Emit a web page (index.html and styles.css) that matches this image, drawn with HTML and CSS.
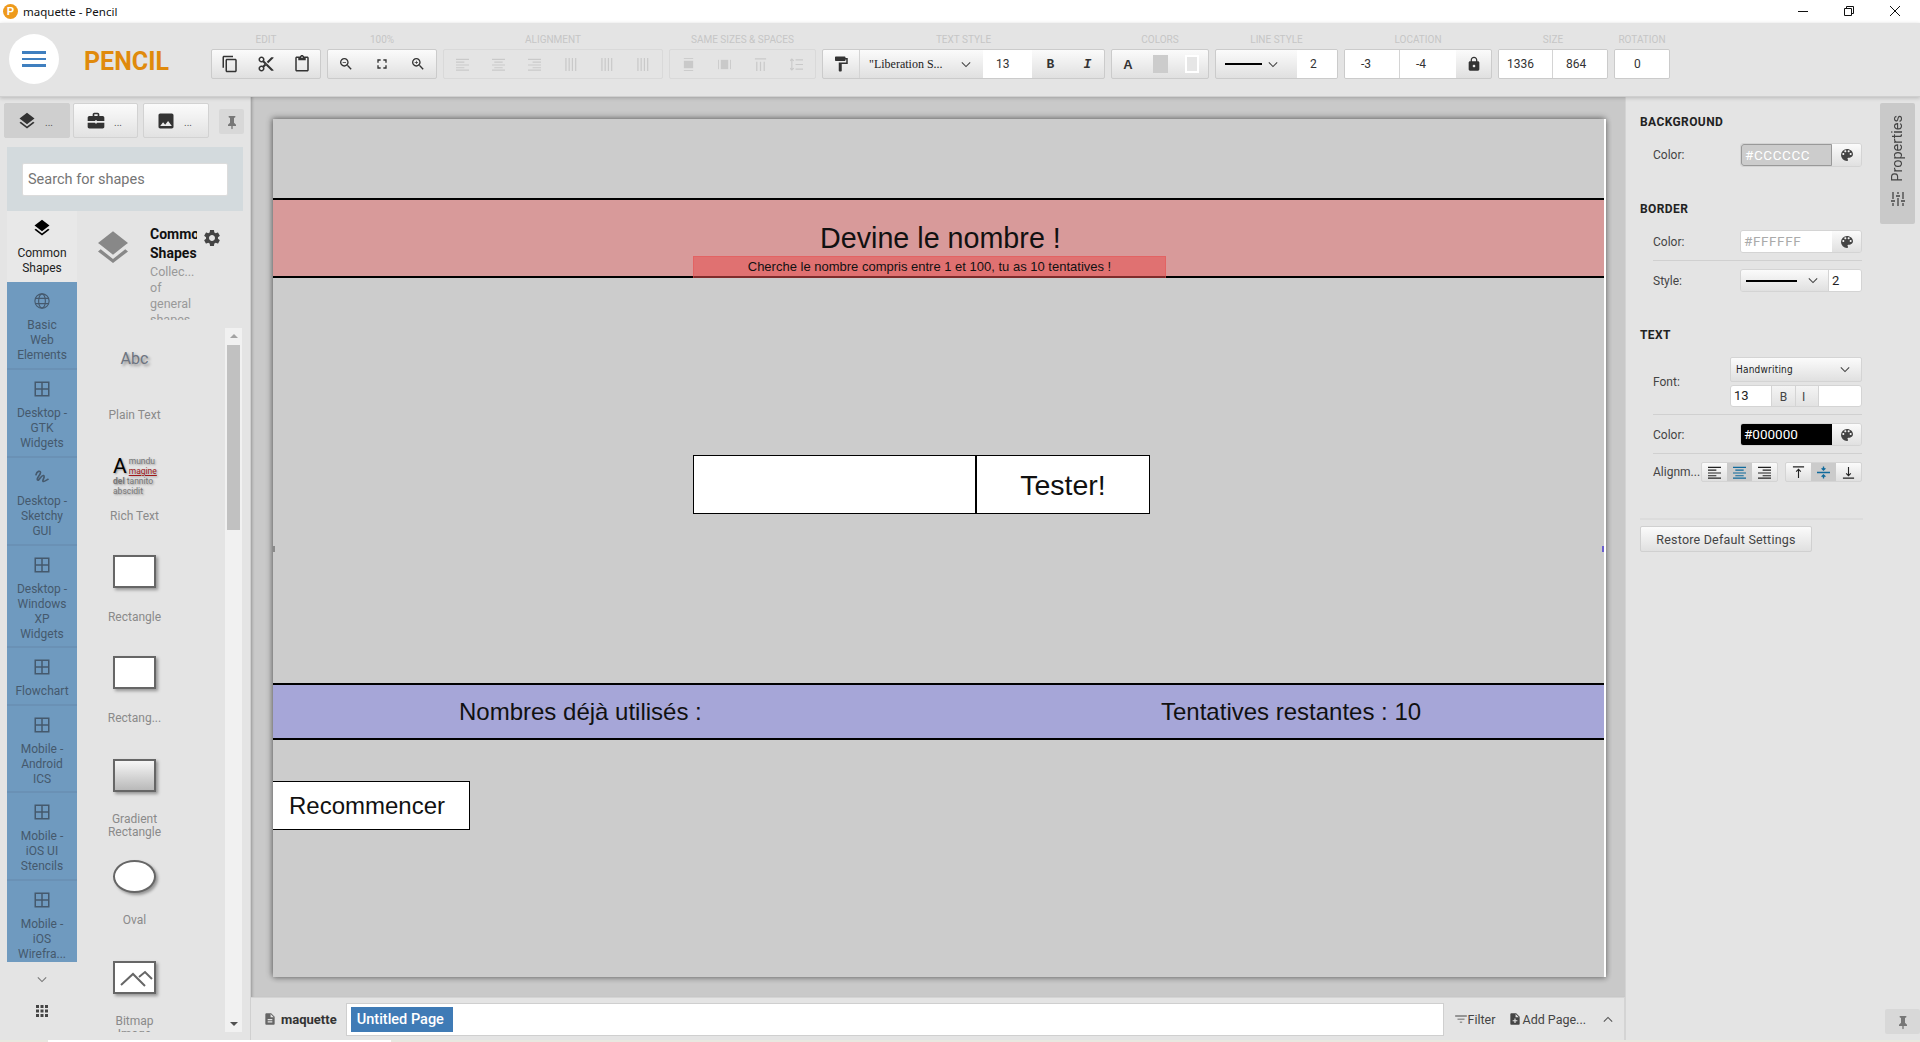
FILE: index.html
```html
<!DOCTYPE html>
<html lang="fr">
<head>
    <meta charset="UTF-8">
    <meta name="viewport" content="width=device-width, initial-scale=1.0">
    <title>maquette - Pencil</title>
    <link rel="stylesheet" href="styles.css">
</head>
<body>
    <!-- icon set -->
    <svg class="icon-defs" xmlns="http://www.w3.org/2000/svg">
        <symbol id="i-copy" viewBox="0 0 24 24"><path d="M16 1H4c-1.1 0-2 .9-2 2v14h2V3h12V1zm3 4H8c-1.1 0-2 .9-2 2v14c0 1.1.9 2 2 2h11c1.1 0 2-.9 2-2V7c0-1.1-.9-2-2-2zm0 16H8V7h11v14z"/></symbol>
        <symbol id="i-cut" viewBox="0 0 24 24"><path d="M9.64 7.64c.23-.5.36-1.05.36-1.64 0-2.21-1.79-4-4-4S2 3.79 2 6s1.79 4 4 4c.59 0 1.14-.13 1.64-.36L10 12l-2.36 2.36C7.14 14.13 6.59 14 6 14c-2.21 0-4 1.79-4 4s1.79 4 4 4 4-1.79 4-4c0-.59-.13-1.14-.36-1.64L12 14l7 7h3v-1L9.64 7.64zM6 8c-1.1 0-2-.89-2-2s.9-2 2-2 2 .89 2 2-.9 2-2 2zm0 12c-1.1 0-2-.89-2-2s.9-2 2-2 2 .89 2 2-.9 2-2 2zm6-7.5c-.28 0-.5-.22-.5-.5s.22-.5.5-.5.5.22.5.5-.22.5-.5.5zM19 3l-6 6 2 2 7-7V3z"/></symbol>
        <symbol id="i-paste" viewBox="0 0 24 24"><path d="M19 2h-4.18C14.4.84 13.3 0 12 0c-1.3 0-2.4.84-2.82 2H5c-1.1 0-2 .9-2 2v16c0 1.1.9 2 2 2h14c1.1 0 2-.9 2-2V4c0-1.1-.9-2-2-2zm-7 0c.55 0 1 .45 1 1s-.45 1-1 1-1-.45-1-1 .45-1 1-1zm7 18H5V4h2v3h10V4h2v16z"/></symbol>
        <symbol id="i-zoom-out" viewBox="0 0 24 24"><path d="M15.5 14h-.79l-.28-.27C15.41 12.59 16 11.11 16 9.5 16 5.91 13.09 3 9.5 3S3 5.91 3 9.5 5.91 16 9.5 16c1.61 0 3.09-.59 4.23-1.57l.27.28v.79l5 4.99L20.49 19l-4.99-5zm-6 0C7.01 14 5 11.99 5 9.5S7.01 5 9.5 5 14 7.01 14 9.5 11.99 14 9.5 14zM7 9h5v1H7z"/></symbol>
        <symbol id="i-zoom-in" viewBox="0 0 24 24"><path d="M15.5 14h-.79l-.28-.27C15.41 12.59 16 11.11 16 9.5 16 5.91 13.09 3 9.5 3S3 5.91 3 9.5 5.91 16 9.5 16c1.61 0 3.09-.59 4.23-1.57l.27.28v.79l5 4.99L20.49 19l-4.99-5zm-6 0C7.01 14 5 11.99 5 9.5S7.01 5 9.5 5 14 7.01 14 9.5 11.99 14 9.5 14zM12 10h-2v2H9v-2H7V9h2V7h1v2h2v1z"/></symbol>
        <symbol id="i-fit" viewBox="0 0 24 24"><path d="M7 14H5v5h5v-2H7v-3zm-2-4h2V7h3V5H5v5zm12 7h-3v2h5v-5h-2v3zM14 5v2h3v3h2V5h-5z"/></symbol>
        <symbol id="i-layers" viewBox="0 0 24 24"><path d="M11.99 18.54l-7.37-5.73L3 14.07l9 7 9-7-1.63-1.27-7.38 5.74zM12 16l7.36-5.73L21 9l-9-7-9 7 1.63 1.27L12 16z"/></symbol>
        <symbol id="i-work" viewBox="0 0 24 24"><path d="M20 6h-4V4c0-1.11-.89-2-2-2h-4c-1.11 0-2 .89-2 2v2H4c-1.11 0-1.99.89-1.99 2L2 12h9v-1h2v1h9V8c0-1.11-.89-2-2-2zm-6 0h-4V4h4v2zM2 14v5c0 1.11.89 2 2 2h16c1.11 0 2-.89 2-2v-5h-9v1h-2v-1H2z"/></symbol>
        <symbol id="i-image" viewBox="0 0 24 24"><path d="M21 19V5c0-1.1-.9-2-2-2H5c-1.1 0-2 .9-2 2v14c0 1.1.9 2 2 2h14c1.1 0 2-.9 2-2zM8.5 13.5l2.5 3.01L14.5 12l4.5 6H5l3.5-4.5z"/></symbol>
        <symbol id="i-pin" viewBox="0 0 24 24"><path d="M7 3h10v2l-2 1v7l3 3v2h-5v4l-1 1-1-1v-4H6v-2l3-3V6L7 5z"/></symbol>
        <symbol id="i-gear" viewBox="0 0 24 24"><path d="M19.14 12.94c.04-.3.06-.61.06-.94 0-.32-.02-.64-.07-.94l2.03-1.58c.18-.14.23-.41.12-.61l-1.92-3.32c-.12-.22-.37-.29-.59-.22l-2.39.96c-.5-.38-1.03-.7-1.62-.94l-.36-2.54c-.04-.24-.24-.41-.48-.41h-3.84c-.24 0-.43.17-.47.41l-.36 2.54c-.59.24-1.13.57-1.62.94l-2.39-.96c-.22-.08-.47 0-.59.22L2.74 8.87c-.12.21-.08.47.12.61l2.03 1.58c-.05.3-.09.63-.09.94s.02.64.07.94l-2.03 1.58c-.18.14-.23.41-.12.61l1.92 3.32c.12.22.37.29.59.22l2.39-.96c.5.38 1.03.7 1.62.94l.36 2.54c.05.24.24.41.48.41h3.84c.24 0 .44-.17.47-.41l.36-2.54c.59-.24 1.13-.56 1.62-.94l2.39.96c.22.08.47 0 .59-.22l1.92-3.32c.12-.22.07-.47-.12-.61l-2.01-1.58zM12 15.6c-1.98 0-3.6-1.62-3.6-3.6s1.62-3.6 3.6-3.6 3.6 1.62 3.6 3.6-1.62 3.6-3.6 3.6z"/></symbol>
        <symbol id="i-palette" viewBox="0 0 24 24"><path d="M12 3a9 9 0 0 0 0 18c.83 0 1.5-.67 1.5-1.5 0-.39-.15-.74-.39-1.01-.23-.26-.38-.61-.38-.99 0-.83.67-1.5 1.5-1.5H16c2.76 0 5-2.24 5-5 0-4.42-4.03-8-9-8zm-5.5 9c-.83 0-1.5-.67-1.5-1.5S5.67 9 6.5 9 8 9.67 8 10.5 7.33 12 6.5 12zm3-4C8.67 8 8 7.33 8 6.5S8.67 5 9.5 5s1.5.67 1.5 1.5S10.33 8 9.5 8zm5 0c-.83 0-1.5-.67-1.5-1.5S13.67 5 14.5 5s1.5.67 1.5 1.5S15.33 8 14.5 8zm3 4c-.83 0-1.5-.67-1.5-1.5S16.67 9 17.5 9s1.5.67 1.5 1.5-.67 1.5-1.5 1.5z"/></symbol>
        <symbol id="i-lock" viewBox="0 0 24 24"><path d="M18 8h-1V6c0-2.76-2.24-5-5-5S7 3.24 7 6v2H6c-1.1 0-2 .9-2 2v10c0 1.1.9 2 2 2h12c1.1 0 2-.9 2-2V10c0-1.1-.9-2-2-2zm-6 9c-1.1 0-2-.9-2-2s.9-2 2-2 2 .9 2 2-.9 2-2 2zm3.1-9H8.9V6c0-1.71 1.39-3.1 3.1-3.1 1.71 0 3.1 1.39 3.1 3.1v2z"/></symbol>
        <symbol id="i-paint" viewBox="0 0 24 24"><path d="M18 4V3c0-.55-.45-1-1-1H5c-.55 0-1 .45-1 1v4c0 .55.45 1 1 1h12c.55 0 1-.45 1-1V6h1v4H9v11c0 .55.45 1 1 1h2c.55 0 1-.45 1-1v-9h8V4h-3z"/></symbol>
        <symbol id="i-tune" viewBox="0 0 16 16"><path d="M3 1v7M3 12v3M8 1v2M8 7v8M13 1v7M13 12v3M1 10h4M6 5h4M11 10h4" fill="none" stroke="currentColor" stroke-width="1.3"/></symbol>
        <symbol id="i-apps" viewBox="0 0 24 24"><path d="M4 8h4V4H4v4zm6 12h4v-4h-4v4zm-6 0h4v-4H4v4zm0-6h4v-4H4v4zm6 0h4v-4h-4v4zm6-10v4h4V4h-4zm-6 4h4V4h-4v4zm6 6h4v-4h-4v4zm0 6h4v-4h-4v4z"/></symbol>
        <symbol id="i-file" viewBox="0 0 24 24"><path d="M14 2H6c-1.1 0-1.99.9-1.99 2L4 20c0 1.1.89 2 1.99 2H18c1.1 0 2-.9 2-2V8l-6-6zm2 16H8v-2h8v2zm0-4H8v-2h8v2zm-3-5V3.5L18.5 9H13z"/></symbol>
        <symbol id="i-add-file" viewBox="0 0 24 24"><path d="M14 2H6c-1.1 0-1.99.9-1.99 2L4 20c0 1.1.89 2 1.99 2H18c1.1 0 2-.9 2-2V8l-6-6zm2 14h-3v3h-2v-3H8v-2h3v-3h2v3h3v2zm-3-7V3.5L18.5 9H13z"/></symbol>
        <symbol id="i-filter" viewBox="0 0 24 24"><path d="M10 18h4v-1.5h-4V18zM2 6v1.500h20V6H2zm4 7h12v-1.500H6V13z"/></symbol>
        <symbol id="i-chevron" viewBox="0 0 12 8"><path d="M1 1.5l5 5 5-5" fill="none" stroke="currentColor" stroke-width="1.3"/></symbol>
        <symbol id="i-chevron-up" viewBox="0 0 12 8"><path d="M1 6.5l5-5 5 5" fill="none" stroke="currentColor" stroke-width="1.3"/></symbol>
        <symbol id="i-globe" viewBox="0 0 24 24"><g fill="none" stroke="currentColor" stroke-width="1.5"><circle cx="12" cy="12" r="9.5"/><ellipse cx="12" cy="12" rx="4.5" ry="9.5"/><path d="M3 8.5h18M3 15.5h18"/></g></symbol>
        <symbol id="i-grid" viewBox="0 0 24 24"><g fill="none" stroke="currentColor" stroke-width="2"><rect x="3" y="3" width="18" height="18"/><path d="M12 3v18M3 12h18"/></g></symbol>
        <symbol id="i-sketch" viewBox="0 0 24 24"><path d="M4 9c1-5 6-6 6-3 0 4-6 7-4 10 2 2 5-7 8-6 3 1-3 8 0 8 2 0 4-2 6-3" fill="none" stroke="currentColor" stroke-width="2.2" stroke-linecap="round"/></symbol>
        <symbol id="i-al-left" viewBox="0 0 14 14"><path d="M0 1.5h14M0 4.5h9M0 7.5h14M0 10.5h9M0 13h14" fill="none" stroke="currentColor" stroke-width="1.2"/></symbol>
        <symbol id="i-al-center" viewBox="0 0 14 14"><path d="M0 1.5h14M2.5 4.5h9M0 7.5h14M2.5 10.5h9M0 13h14" fill="none" stroke="currentColor" stroke-width="1.2"/></symbol>
        <symbol id="i-al-right" viewBox="0 0 14 14"><path d="M0 1.5h14M5 4.5h9M0 7.5h14M5 10.5h9M0 13h14" fill="none" stroke="currentColor" stroke-width="1.2"/></symbol>
        <symbol id="i-al-top" viewBox="0 0 14 14"><path d="M1 1h12M7 13V4M4.5 6L7 3.5 9.5 6" fill="none" stroke="currentColor" stroke-width="1.2"/></symbol>
        <symbol id="i-al-middle" viewBox="0 0 14 14"><path d="M0 7h14M7 .5v4M5 2.5l2 2 2-2M7 13.5v-4M5 11.5l2-2 2 2" fill="none" stroke="currentColor" stroke-width="1.4"/></symbol>
        <symbol id="i-al-bottom" viewBox="0 0 14 14"><path d="M1 13h12M7 1v9M4.5 8L7 10.5 9.5 8" fill="none" stroke="currentColor" stroke-width="1.2"/></symbol>
        <symbol id="i-dist-v" viewBox="0 0 14 14"><path d="M2 .5h10M2 13.5h10" stroke="currentColor" fill="none"/><rect x="2" y="3" width="10" height="8" fill="currentColor"/></symbol>
        <symbol id="i-dist-h" viewBox="0 0 14 14"><path d="M.5 2v10M13.5 2v10" stroke="currentColor" fill="none"/><rect x="3" y="2" width="8" height="10" fill="currentColor"/></symbol>
        <symbol id="i-bars-a" viewBox="0 0 14 14"><path d="M1 0v14M4.5 0v14M8 0v14M11.5 0v14" fill="none" stroke="currentColor" stroke-width="1.3"/></symbol>
        <symbol id="i-space-h" viewBox="0 0 14 14"><path d="M1 1h12M3 4v10M7 4v10M11 4v10" fill="none" stroke="currentColor" stroke-width="1.3"/></symbol>
        <symbol id="i-space-v" viewBox="0 0 14 14"><path d="M2 1v12M0 3l2-2 2 2M0 11l2 2 2-2M6 2h8M6 7h8M6 12h8" fill="none" stroke="currentColor" stroke-width="1.2"/></symbol>
    </svg>

    <header class="titlebar">
        <span class="app-icon">P</span>
        <span class="title-text">maquette - Pencil</span>
        <div class="win-controls">
            <svg class="win-btn" viewBox="0 0 12 12"><path d="M1 6.5h10" stroke="#111" fill="none"/></svg>
            <svg class="win-btn" viewBox="0 0 12 12"><path d="M1.5 3.5h7v7h-7zM3.5 3.5v-2h7v7h-2" stroke="#111" fill="none"/></svg>
            <svg class="win-btn" viewBox="0 0 12 12"><path d="M1 1l10 10M11 1L1 11" stroke="#111" fill="none"/></svg>
        </div>
    </header>

    <div class="toolbar">
        <button class="menu-btn"><span></span><span></span><span></span></button>
        <div class="brand">PENCIL</div>

        <div class="tool-col">
            <div class="tool-label">EDIT</div>
            <div class="tool-group w110">
                <span class="tbtn"><svg class="ico18"><use href="#i-copy"/></svg></span>
                <span class="tbtn"><svg class="ico18"><use href="#i-cut"/></svg></span>
                <span class="tbtn"><svg class="ico18"><use href="#i-paste"/></svg></span>
            </div>
        </div>
        <div class="tool-col">
            <div class="tool-label">100%</div>
            <div class="tool-group w110">
                <span class="tbtn"><svg class="ico16"><use href="#i-zoom-out"/></svg></span>
                <span class="tbtn"><svg class="ico16"><use href="#i-fit"/></svg></span>
                <span class="tbtn"><svg class="ico16"><use href="#i-zoom-in"/></svg></span>
            </div>
        </div>
        <div class="tool-col">
            <div class="tool-label">ALIGNMENT</div>
            <div class="tool-group off w220">
                <span class="tbtn"><svg class="ico13"><use href="#i-al-left"/></svg></span>
                <span class="tbtn"><svg class="ico13"><use href="#i-al-center"/></svg></span>
                <span class="tbtn"><svg class="ico13"><use href="#i-al-right"/></svg></span>
                <span class="tbtn"><svg class="ico13"><use href="#i-bars-a"/></svg></span>
                <span class="tbtn"><svg class="ico13"><use href="#i-bars-a"/></svg></span>
                <span class="tbtn"><svg class="ico13"><use href="#i-bars-a"/></svg></span>
            </div>
        </div>
        <div class="tool-col">
            <div class="tool-label">SAME SIZES &amp; SPACES</div>
            <div class="tool-group off w147">
                <span class="tbtn"><svg class="ico13"><use href="#i-dist-v"/></svg></span>
                <span class="tbtn"><svg class="ico13"><use href="#i-dist-h"/></svg></span>
                <span class="tbtn"><svg class="ico13"><use href="#i-space-h"/></svg></span>
                <span class="tbtn"><svg class="ico13"><use href="#i-space-v"/></svg></span>
            </div>
        </div>
        <div class="tool-col">
            <div class="tool-label">TEXT STYLE</div>
            <div class="tool-group w283">
                <span class="tbtn fix37 sep-r"><svg class="ico18"><use href="#i-paint"/></svg></span>
                <span class="tbtn font-pick">"Liberation S...<svg class="chev"><use href="#i-chevron"/></svg></span>
                <span class="tfield fix49">13</span>
                <span class="tbtn fix37 bold-b">B</span>
                <span class="tbtn fix37 ital-i">I</span>
            </div>
        </div>
        <div class="tool-col">
            <div class="tool-label">COLORS</div>
            <div class="tool-group w98">
                <span class="tbtn bold-a">A</span>
                <span class="tbtn"><i class="swatch-fill"></i></span>
                <span class="tbtn"><i class="swatch-line"></i></span>
            </div>
        </div>
        <div class="tool-col">
            <div class="tool-label">LINE STYLE</div>
            <div class="tool-group w123">
                <span class="tbtn line-pick"><i class="line-sample"></i><svg class="chev"><use href="#i-chevron"/></svg></span>
                <span class="tfield fix41">2</span>
            </div>
        </div>
        <div class="tool-col">
            <div class="tool-label">LOCATION</div>
            <div class="tool-group w148">
                <span class="tfield fix55 pl16 sep-r">-3</span>
                <span class="tfield fix56 pl16">-4</span>
                <span class="tbtn"><svg class="ico16"><use href="#i-lock"/></svg></span>
            </div>
        </div>
        <div class="tool-col">
            <div class="tool-label">SIZE</div>
            <div class="tool-group w110">
                <span class="tfield fix54 pl8 sep-r">1336</span>
                <span class="tfield fix56">864</span>
            </div>
        </div>
        <div class="tool-col">
            <div class="tool-label">ROTATION</div>
            <div class="tool-group w56">
                <span class="tfield fix56 pl19">0</span>
            </div>
        </div>
    </div>

    <div class="main">
        <!-- left side: shapes -->
        <aside class="left-panel">
            <div class="side-tabs">
                <span class="side-tab active"><svg class="ico20"><use href="#i-layers"/></svg><em>...</em></span>
                <span class="side-tab"><svg class="ico20"><use href="#i-work"/></svg><em>...</em></span>
                <span class="side-tab"><svg class="ico20"><use href="#i-image"/></svg><em>...</em></span>
                <span class="pin-btn"><svg class="ico16"><use href="#i-pin"/></svg></span>
            </div>
            <div class="search-box">
                <div class="search-input">Search for shapes</div>
            </div>
            <div class="shape-browser">
                <div class="rail">
                    <div class="rail-list">
                        <div class="rail-item current"><svg class="rail-ico"><use href="#i-layers"/></svg><div>Common<br>Shapes</div></div>
                        <div class="rail-item"><svg class="rail-ico"><use href="#i-globe"/></svg><div>Basic<br>Web<br>Elements</div></div>
                        <div class="rail-item"><svg class="rail-ico"><use href="#i-grid"/></svg><div>Desktop -<br>GTK<br>Widgets</div></div>
                        <div class="rail-item"><svg class="rail-ico"><use href="#i-sketch"/></svg><div>Desktop -<br>Sketchy<br>GUI</div></div>
                        <div class="rail-item tight"><svg class="rail-ico"><use href="#i-grid"/></svg><div>Desktop -<br>Windows<br>XP<br>Widgets</div></div>
                        <div class="rail-item"><svg class="rail-ico"><use href="#i-grid"/></svg><div>Flowchart</div></div>
                        <div class="rail-item tight"><svg class="rail-ico"><use href="#i-grid"/></svg><div>Mobile -<br>Android<br>ICS</div></div>
                        <div class="rail-item"><svg class="rail-ico"><use href="#i-grid"/></svg><div>Mobile -<br>iOS UI<br>Stencils</div></div>
                        <div class="rail-item"><svg class="rail-ico"><use href="#i-grid"/></svg><div>Mobile -<br>iOS<br>Wirefra...</div></div>
                    </div>
                    <svg class="rail-more"><use href="#i-chevron"/></svg>
                    <svg class="rail-apps"><use href="#i-apps"/></svg>
                </div>
                <div class="shapes-col">
                    <div class="coll-head">
                        <svg class="coll-ico"><use href="#i-layers"/></svg>
                        <div class="coll-text">
                            <div class="coll-name">Common<br>Shapes</div>
                            <div class="coll-desc">Collec...<br>of<br>general<br>shapes</div>
                        </div>
                        <svg class="coll-gear"><use href="#i-gear"/></svg>
                    </div>
                    <div class="shape-scroll">
                        <div class="shape-list">
                            <div class="shape">
                                <div class="shape-icon"><span class="abc">Abc</span></div>
                                <div class="shape-name">Plain Text</div>
                            </div>
                            <div class="shape">
                                <div class="shape-icon"><div class="rich">
                                    <div class="rich-top"><b class="rich-a">A</b><span>mundu<br><u>magine</u></span></div>
                                    <div><b>del</b> tannito<br>abscidit</div>
                                </div></div>
                                <div class="shape-name">Rich Text</div>
                            </div>
                            <div class="shape">
                                <div class="shape-icon"><i class="s-rect"></i></div>
                                <div class="shape-name">Rectangle</div>
                            </div>
                            <div class="shape">
                                <div class="shape-icon"><i class="s-rect"></i></div>
                                <div class="shape-name">Rectang...</div>
                            </div>
                            <div class="shape">
                                <div class="shape-icon low"><i class="s-rect grad"></i></div>
                                <div class="shape-name">Gradient<br>Rectangle</div>
                            </div>
                            <div class="shape">
                                <div class="shape-icon low"><i class="s-rect oval"></i></div>
                                <div class="shape-name">Oval</div>
                            </div>
                            <div class="shape">
                                <div class="shape-icon low"><div class="s-rect"><svg class="bitmap" viewBox="0 0 39 29"><path d="M6 22l12-11 12 12M24 14l6-5 7 7" fill="none" stroke="#666" stroke-width="2"/></svg></div></div>
                                <div class="shape-name">Bitmap<br>Image</div>
                            </div>
                        </div>
                        <div class="scrollbar">
                            <i class="arrow-up"></i>
                            <i class="thumb"></i>
                            <i class="arrow-down"></i>
                        </div>
                    </div>
                </div>
            </div>
        </aside>

        <!-- drawing area -->
        <section class="center">
            <div class="canvas-area">
                <div class="canvas">
                    <div class="wf band-red"></div>
                    <div class="wf wf-title">Devine le nombre !</div>
                    <div class="wf wf-sub">Cherche le nombre compris entre 1 et 100, tu as 10 tentatives !</div>
                    <div class="wf wf-input"></div>
                    <div class="wf wf-test">Tester!</div>
                    <div class="wf band-blue"></div>
                    <div class="wf wf-used">Nombres déjà utilisés :</div>
                    <div class="wf wf-left">Tentatives restantes : 10</div>
                    <div class="wf wf-restart">Recommencer</div>
                    <i class="wf handle-l"></i>
                    <i class="wf handle-r"></i>
                </div>
            </div>
            <div class="page-bar">
                <svg class="ico14 grey"><use href="#i-file"/></svg>
                <span class="doc-name">maquette</span>
                <div class="page-list"><span class="page-tab">Untitled Page</span></div>
                <span class="bar-link first"><svg class="ico14"><use href="#i-filter"/></svg>Filter</span>
                <span class="bar-link"><svg class="ico14"><use href="#i-add-file"/></svg>Add Page...</span>
                <svg class="chev up"><use href="#i-chevron-up"/></svg>
            </div>
        </section>

        <!-- right side: properties -->
        <aside class="right-panel">
            <div class="props">
                <div class="prop-title">BACKGROUND</div>
                <div class="prop-row h24 after-title">
                    <label>Color:</label>
                    <div class="color-field">
                        <span class="color-value bg-ccc">#CCCCCC</span>
                        <span class="color-btn"><svg class="ico16"><use href="#i-palette"/></svg></span>
                    </div>
                </div>

                <div class="prop-title gap-title">BORDER</div>
                <div class="prop-row h23 after-title">
                    <label>Color:</label>
                    <div class="color-field">
                        <span class="color-value bg-white">#FFFFFF</span>
                        <span class="color-btn"><svg class="ico16"><use href="#i-palette"/></svg></span>
                    </div>
                </div>
                <div class="prop-sep"></div>
                <div class="prop-row h23">
                    <label>Style:</label>
                    <div class="color-field">
                        <span class="style-pick"><i class="line-sample"></i><svg class="chev"><use href="#i-chevron"/></svg></span>
                        <span class="style-num">2</span>
                    </div>
                </div>

                <div class="prop-title gap-text">TEXT</div>
                <div class="prop-row font-row after-title">
                    <label>Font:</label>
                    <div class="font-ctl">
                        <span class="font-select"><span class="handw">Handwriting</span><svg class="chev"><use href="#i-chevron"/></svg></span>
                        <div class="font-opts">
                            <span class="opt-num">13</span>
                            <span class="opt-btn">B</span>
                            <span class="opt-btn slim">I</span>
                            <span class="opt-blank"></span>
                        </div>
                    </div>
                </div>
                <div class="prop-sep"></div>
                <div class="prop-row h23">
                    <label>Color:</label>
                    <div class="color-field">
                        <span class="color-value bg-black">#000000</span>
                        <span class="color-btn"><svg class="ico16"><use href="#i-palette"/></svg></span>
                    </div>
                </div>
                <div class="prop-sep"></div>
                <div class="prop-row h20">
                    <label>Alignm...</label>
                    <div class="align-groups">
                        <div class="align-group">
                            <span class="al-btn"><svg class="ico13"><use href="#i-al-left"/></svg></span>
                            <span class="al-btn on"><svg class="ico13"><use href="#i-al-center"/></svg></span>
                            <span class="al-btn"><svg class="ico13"><use href="#i-al-right"/></svg></span>
                        </div>
                        <div class="align-group">
                            <span class="al-btn"><svg class="ico13"><use href="#i-al-top"/></svg></span>
                            <span class="al-btn on"><svg class="ico13"><use href="#i-al-middle"/></svg></span>
                            <span class="al-btn"><svg class="ico13"><use href="#i-al-bottom"/></svg></span>
                        </div>
                    </div>
                </div>
                <div class="prop-rule"></div>
                <button class="restore-btn">Restore Default Settings</button>
            </div>
            <div class="prop-side">
                <div class="prop-tab">
                    <span class="prop-tab-text">Properties</span>
                    <svg class="tune"><use href="#i-tune"/></svg>
                </div>
                <span class="pin-btn bottom"><svg class="ico16"><use href="#i-pin"/></svg></span>
            </div>
        </aside>
    </div>
    <div class="status-strip"><i></i></div>
</body>
</html>
```

FILE: styles.css
```css
* {
    box-sizing: border-box;
}
html, body {
    margin: 0;
    height: 100%;
    overflow: hidden;
}
body {
    font-family: Roboto, "Liberation Sans", sans-serif;
    font-size: 12px;
    color: #333;
    background-color: #e4e4e4;
    display: flex;
    flex-direction: column;
}
.icon-defs {
    display: none;
}
svg {
    fill: currentColor;
    flex-shrink: 0;
}
i, em {
    font-style: normal;
}
.ico13 { width: 13px; height: 13px; }
.ico14 { width: 14px; height: 14px; }
.ico16 { width: 16px; height: 16px; }
.ico18 { width: 18px; height: 18px; }
.ico20 { width: 20px; height: 20px; }
.chev { width: 10px; height: 7px; color: #444; }

/* title bar */
.titlebar {
    height: 23px;
    background-color: #fff;
    display: flex;
    align-items: center;
    padding-left: 3px;
    flex-shrink: 0;
}
.app-icon {
    width: 15px;
    height: 15px;
    border-radius: 50%;
    background-color: #ee9a1c;
    color: #fff;
    font: bold 11px/15px "Liberation Sans", sans-serif;
    text-align: center;
}
.title-text {
    margin-left: 5px;
    font-family: "Noto Sans", sans-serif;
    font-size: 11.5px;
    color: #111;
}
.win-controls {
    margin-left: auto;
    margin-bottom: 2px;
    display: flex;
    gap: 34px;
    padding-right: 19px;
}
.win-btn {
    width: 12px;
    height: 12px;
}

/* top toolbar */
.toolbar {
    height: 74px;
    flex-shrink: 0;
    display: flex;
    align-items: flex-start;
    gap: 6px;
    padding: 11px 0 0 9px;
    background-color: #e4e4e4;
    border-bottom: 1px solid #cfcfcf;
    box-shadow: 0 1px 4px rgba(0,0,0,0.2);
    position: relative;
    z-index: 3;
}
.menu-btn {
    width: 50px;
    height: 50px;
    border: none;
    border-radius: 50%;
    background-color: #fff;
    display: flex;
    flex-direction: column;
    justify-content: center;
    align-items: center;
    gap: 4px;
    padding: 0;
}
.menu-btn span {
    width: 24px;
    height: 2.5px;
    background-color: #3f7fbf;
}
.brand {
    width: 140px;
    padding-left: 19px;
    margin-top: 14px;
    font-size: 25px;
    line-height: 28px;
    font-weight: bold;
    color: #e08a0c;
}
.tool-col {
    display: flex;
    flex-direction: column;
    align-items: center;
}
.tool-label {
    font-size: 10px;
    line-height: 12px;
    height: 15px;
    color: #c6c6c6;
    white-space: nowrap;
}
.tool-group {
    height: 30px;
    display: flex;
    border: 1px solid #cbcbcb;
    border-radius: 2px;
    background: linear-gradient(#fbfbfb, #e0e0e0);
    overflow: hidden;
}
.w56 { width: 56px; }
.w98 { width: 98px; }
.w110 { width: 110px; }
.w123 { width: 123px; }
.w147 { width: 147px; }
.w148 { width: 148px; }
.w220 { width: 220px; }
.w283 { width: 283px; }
.tool-group.off {
    background: none;
    border-color: #d9d9d9;
    color: #c9c9c9;
}
.tbtn {
    flex: 1;
    display: flex;
    align-items: center;
    justify-content: center;
}
.tfield {
    background-color: #fff;
    display: flex;
    align-items: center;
    padding-left: 13px;
    color: #333;
}
.fix37 { flex: 0 0 37px; }
.fix41 { flex: 0 0 41px; }
.fix49 { flex: 0 0 49px; }
.fix54 { flex: 0 0 54px; }
.fix55 { flex: 0 0 55px; }
.fix56 { flex: 0 0 56px; }
.pl8 { padding-left: 8px; }
.pl16 { padding-left: 16px; }
.pl19 { padding-left: 19px; }
.sep-r { border-right: 1px solid #d4d4d4; }
.font-pick {
    flex: 0 0 123px;
    justify-content: space-between;
    padding: 0 12px 0 9px;
    font-family: "Liberation Serif", serif;
    color: #222;
}
.bold-b {
    font: bold 13px "Liberation Mono", monospace;
    color: #333;
}
.ital-i {
    font: italic bold 13px "Liberation Mono", monospace;
    color: #333;
}
.bold-a {
    font: bold 13px "Liberation Sans", sans-serif;
    color: #333;
}
.swatch-fill {
    width: 15px;
    height: 18px;
    background-color: #ccc;
}
.swatch-line {
    width: 14px;
    height: 18px;
    border: 2px solid #fff;
    background-color: #e6e6e6;
}
.line-pick {
    flex: 0 0 81px;
    justify-content: flex-start;
    gap: 6px;
    padding-left: 9px;
}
.line-sample {
    width: 37px;
    height: 2px;
    background-color: #000;
}

/* main row */
.main {
    flex: 1;
    min-height: 0;
    display: flex;
}
.status-strip {
    height: 2px;
    flex-shrink: 0;
    background-color: #e8e8e0;
}
.status-strip i {
    display: block;
    width: 343px;
    height: 2px;
    margin-left: 48px;
    background-color: #fff;
}

/* left panel */
.left-panel {
    width: 251px;
    flex-shrink: 0;
    padding: 6px 7px 0 4px;
    display: flex;
    flex-direction: column;
    border-right: 1px solid #d0d0d0;
}
.side-tabs {
    height: 35px;
    display: flex;
    align-items: flex-start;
}
.side-tab {
    flex: 0 0 66px;
    height: 35px;
    margin-right: 3px;
    padding-left: 12px;
    display: flex;
    align-items: center;
    gap: 8px;
    border: 1px solid #d2d2d2;
    border-radius: 2px;
    background: linear-gradient(#fbfbfb, #e2e2e2);
    color: #333;
}
.side-tab:nth-child(2) { flex-basis: 65px; margin-right: 5px; }
.side-tab.active {
    background: #cfcfcf;
    border-color: #cfcfcf;
}
.side-tab em {
    font-size: 10px;
    color: #555;
    margin-top: 4px;
}
.pin-btn {
    flex: 0 0 25px;
    height: 25px;
    margin: 6px 0 0 7px;
    background-color: #d8d8d8;
    border-radius: 2px;
    color: #777;
    display: flex;
    align-items: center;
    justify-content: center;
}
.search-box {
    margin: 9px 0 0 3px;
    height: 64px;
    padding: 16px 15px;
    background-color: #d3dadd;
}
.search-input {
    height: 33px;
    padding-left: 5px;
    line-height: 31px;
    font-size: 14.5px;
    color: #757575;
    background-color: #fff;
    border: 1px solid #dcdcdc;
    border-radius: 2px;
}
.shape-browser {
    flex: 1;
    min-height: 0;
    margin-left: 3px;
    display: flex;
}
.rail {
    width: 70px;
    flex-shrink: 0;
    display: flex;
    flex-direction: column;
    align-items: center;
}
.rail-list {
    width: 70px;
    height: 751px;
    flex-shrink: 0;
    overflow: hidden;
    background-color: #6f9abf;
}
.rail-item {
    padding: 10px 0 5px;
    border-bottom: 2px solid #6a91b5;
    text-align: center;
    line-height: 15px;
    color: #45596d;
}
.rail-item.tight {
    padding-bottom: 4px;
}
.rail-item.current {
    background-color: #e8e8e8;
    border-bottom: none;
    color: #222;
    padding: 7px 0 6px;
}
.rail-ico {
    display: block;
    width: 18px;
    height: 18px;
    margin: 0 auto 8px;
}
.rail-item.current .rail-ico {
    width: 20px;
    height: 20px;
    color: #000;
    margin-bottom: 8px;
}
.rail-more {
    width: 10px;
    height: 7px;
    margin-top: 14px;
    color: #777;
}
.rail-apps {
    width: 18px;
    height: 18px;
    margin-top: 19px;
    color: #444;
}
.shapes-col {
    flex: 1;
    min-width: 0;
    display: flex;
    flex-direction: column;
}
.coll-head {
    height: 117px;
    flex-shrink: 0;
    display: flex;
    align-items: flex-start;
}
.coll-ico {
    width: 40px;
    height: 40px;
    margin: 17px 0 0 16px;
    color: #888;
}
.coll-text {
    width: 47px;
    height: 95px;
    margin: 14px 0 0 17px;
    overflow: hidden;
    white-space: nowrap;
}
.coll-name {
    font-size: 14px;
    line-height: 19px;
    font-weight: bold;
    color: #111;
}
.coll-desc {
    margin-top: 1px;
    font-size: 12.5px;
    line-height: 16px;
    color: #999;
}
.coll-gear {
    width: 20px;
    height: 20px;
    margin: 17px 0 0 5px;
    color: #444;
}
.shape-scroll {
    flex: 1;
    min-height: 0;
    display: flex;
    margin-bottom: 8px;
}
.shape-list {
    width: 148px;
    padding: 25px 33px 0 0;
    overflow: hidden;
}
.shape {
    height: 101px;
    display: flex;
    flex-direction: column;
    align-items: center;
}
.shape-icon {
    height: 56px;
    flex-shrink: 0;
}
.shape-icon.low {
    padding-top: 2px;
}
.shape-name {
    text-align: center;
    font-size: 12px;
    line-height: 12.5px;
    color: #8a8a8a;
}
.abc {
    display: block;
    margin-top: -4px;
    font-size: 16px;
    line-height: 20px;
    color: #6d7480;
    text-shadow: 2px 2px 3px rgba(0,0,0,0.4);
}
.rich {
    width: 43px;
    margin-top: 2px;
    font-size: 8.5px;
    line-height: 10px;
    color: #777;
    text-shadow: 1px 1px 2px rgba(0,0,0,0.35);
    white-space: nowrap;
}
.rich-top {
    display: flex;
    align-items: flex-end;
    gap: 2px;
}
.rich-a {
    font-size: 21px;
    line-height: 20px;
    font-weight: normal;
    color: #000;
}
.rich u {
    color: #a01818;
}
.s-rect {
    display: block;
    width: 43px;
    height: 33px;
    border: 2px solid #666;
    background-color: #fff;
    box-shadow: 2px 2px 3px rgba(0,0,0,0.35);
}
.s-rect.grad {
    background: linear-gradient(#f6f6f6, #b9b9b9);
}
.s-rect.oval {
    border-radius: 50%;
}
.bitmap {
    display: block;
    width: 39px;
    height: 29px;
}
.scrollbar {
    width: 17px;
    background-color: #f1f1f1;
    display: flex;
    flex-direction: column;
    align-items: center;
    position: relative;
}
.thumb {
    display: block;
    width: 13px;
    height: 185px;
    margin-top: 17px;
    background-color: #c1c1c1;
}
.arrow-up, .arrow-down {
    position: absolute;
    left: 5px;
    width: 0;
    height: 0;
    border-left: 4px solid transparent;
    border-right: 4px solid transparent;
}
.arrow-up {
    top: 6px;
    border-bottom: 4px solid #a3a3a3;
}
.arrow-down {
    bottom: 6px;
    border-top: 4px solid #505050;
}

/* center */
.center {
    flex: 1;
    min-width: 0;
    display: flex;
    flex-direction: column;
}
.canvas-area {
    flex: 1;
    min-height: 0;
    padding: 22px 0 0 22px;
    background-color: #c9c9c9;
    box-shadow: inset 3px 0 3px -2px rgba(0,0,0,0.25);
}
.canvas {
    width: 1333px;
    height: 858px;
    position: relative;
    background-color: #ccc;
    border-right: 2px solid #fff;
    box-shadow: -1px -1px 6px rgba(0,0,0,0.45), 1px 2px 5px rgba(0,0,0,0.2);
}
.wf {
    position: absolute;
    font-family: "Liberation Sans", Arial, sans-serif;
    color: #111;
    white-space: nowrap;
}
.band-red {
    left: 0;
    right: 0;
    top: 79px;
    height: 80px;
    background-color: #d89a9a;
    border-top: 2px solid #000;
    border-bottom: 2px solid #000;
}
.wf-title {
    left: 547px;
    top: 101px;
    font-size: 28.7px;
    line-height: 36px;
}
.wf-sub {
    left: 420px;
    top: 137px;
    width: 473px;
    height: 22px;
    text-align: center;
    font-size: 13px;
    line-height: 20px;
    background-color: rgba(232,80,80,0.55);
    border: 1px solid rgba(232,80,80,0.4);
    border-bottom: none;
}
.wf-input {
    left: 420px;
    top: 336px;
    width: 283px;
    height: 59px;
    background-color: #fff;
    border: 1.5px solid #000;
}
.wf-test {
    left: 702px;
    top: 336px;
    width: 175px;
    height: 59px;
    background-color: #fff;
    border: 1.5px solid #000;
    border-left-width: 2px;
    text-align: center;
    font-size: 28.5px;
    line-height: 58px;
}
.band-blue {
    left: 0;
    right: 0;
    top: 564px;
    height: 57px;
    background-color: #a6a6d8;
    border-top: 2px solid #000;
    border-bottom: 2px solid #000;
}
.wf-used {
    left: 186px;
    top: 578px;
    font-size: 24px;
    line-height: 30px;
}
.wf-left {
    left: 888px;
    top: 578px;
    font-size: 24px;
    line-height: 30px;
}
.wf-restart {
    left: 0;
    top: 662px;
    width: 197px;
    height: 49px;
    padding-left: 16px;
    background-color: #fff;
    border: 1px solid #000;
    border-left: none;
    font-size: 24px;
    line-height: 48px;
}
.handle-l, .handle-r {
    top: 427px;
    width: 2px;
    height: 6px;
}
.handle-l {
    left: 0;
    background-color: #8a8a8a;
}
.handle-r {
    right: 0;
    background-color: #6a5fd0;
}
.page-bar {
    height: 43px;
    flex-shrink: 0;
    display: flex;
    align-items: center;
    padding: 0 11px 0 12px;
    background-color: #e4e4e4;
    border-top: 1px solid #d4d4d4;
    border-right: 1px solid #d4d4d4;
}
.grey {
    color: #666;
}
.doc-name {
    margin-left: 4px;
    width: 65px;
    font-size: 13px;
    font-weight: bold;
    color: #333;
}
.page-list {
    width: 1102px;
    height: 33px;
    padding: 3px 4px;
    background-color: #fff;
    border: 1px solid #cfcfcf;
}
.page-tab {
    display: block;
    width: 102px;
    height: 25px;
    padding-left: 6px;
    background-color: #3f7bb6;
    color: #fff;
    font-size: 14.5px;
    font-weight: 500;
    line-height: 25px;
}
.bar-link {
    display: flex;
    align-items: center;
    margin-left: 13px;
    color: #444;
    font-size: 12.5px;
    white-space: nowrap;
}
.bar-link.first {
    margin-left: 10px;
}
.chev.up {
    margin-left: 17px;
    color: #555;
}

/* right panel */
.right-panel {
    width: 295px;
    flex-shrink: 0;
    display: flex;
    border-left: 1px solid #d4d4d4;
}
.props {
    width: 254px;
    padding: 17px 0 0 14px;
    flex-shrink: 0;
}
.prop-title {
    width: 222px;
    height: 16px;
    font-size: 12px;
    line-height: 16px;
    font-weight: bold;
    color: #222;
    letter-spacing: 0.4px;
}
.gap-title {
    margin-top: 34px;
}
.gap-text {
    margin-top: 35px;
}
.after-title {
    margin-top: 13px;
}
.prop-row {
    width: 209px;
    margin-left: 13px;
    display: flex;
    align-items: center;
    justify-content: space-between;
    color: #444;
}
.h20 { height: 20px; }
.h23 { height: 23px; }
.h24 { height: 24px; }
.color-field {
    width: 122px;
    height: 100%;
    display: flex;
    border-radius: 3px;
    overflow: hidden;
    border: 1px solid #d4d4d4;
}
.color-value {
    flex: 0 0 91px;
    padding-left: 3px;
    font-size: 13.5px;
    line-height: 21px;
}
.bg-ccc { background-color: #ccc; color: #fff; border: 1px solid #999; border-radius: 3px 0 0 3px; letter-spacing: 0.6px; }
.bg-white { background-color: #fff; color: #aaa; letter-spacing: 0.6px; }
.bg-black { background-color: #000; color: #fff; }
.color-btn {
    flex: 1;
    display: flex;
    align-items: center;
    justify-content: center;
    background: linear-gradient(#fbfbfb, #e0e0e0);
    color: #444;
}
.prop-sep {
    width: 209px;
    height: 1px;
    margin: 7px 0 8px 13px;
    background-color: #d0d0d0;
}
.style-pick {
    flex: 0 0 87px;
    display: flex;
    align-items: center;
    gap: 11px;
    padding-left: 5px;
    background: linear-gradient(#fbfbfb, #e0e0e0);
}
.style-pick .line-sample {
    width: 51px;
}
.style-num {
    flex: 1;
    padding-left: 3px;
    background-color: #fff;
    border-left: 1px solid #d4d4d4;
    font-size: 13px;
    line-height: 21px;
    color: #222;
}
.font-row {
    height: 50px;
    margin-top: 14px;
}
.font-ctl {
    width: 132px;
}
.font-select {
    height: 25px;
    display: flex;
    align-items: center;
    justify-content: space-between;
    padding: 0 11px 0 5px;
    border: 1px solid #d4d4d4;
    border-radius: 2px;
    background: linear-gradient(#fbfbfb, #e0e0e0);
}
.handw {
    font-family: "DejaVu Sans", sans-serif;
    font-size: 10px;
    font-stretch: condensed;
    color: #222;
    letter-spacing: 0.2px;
}
.font-opts {
    height: 22px;
    margin-top: 3px;
    display: flex;
    border: 1px solid #d4d4d4;
    border-radius: 3px;
    overflow: hidden;
    background-color: #fff;
}
.opt-num {
    flex: 0 0 40px;
    padding-left: 3px;
    font-size: 13px;
    line-height: 20px;
    color: #222;
}
.opt-btn {
    flex: 0 0 24px;
    text-align: center;
    line-height: 22px;
    color: #444;
    background: linear-gradient(#f4f4f4, #e2e2e2);
    border-left: 1px solid #d4d4d4;
}
.opt-btn.slim {
    flex: 0 0 23px;
    text-align: left;
    padding-left: 6px;
}
.opt-blank {
    flex: 1;
    border-left: 1px solid #d4d4d4;
}
.align-groups {
    display: flex;
    gap: 7px;
}
.align-group {
    width: 77px;
    height: 20px;
    display: flex;
    border: 1px solid #d4d4d4;
    border-radius: 2px;
    overflow: hidden;
    background: linear-gradient(#fbfbfb, #e0e0e0);
    color: #222;
}
.al-btn {
    flex: 1;
    display: flex;
    align-items: center;
    justify-content: center;
}
.al-btn.on {
    background: #cbcbcb;
    color: #0f6a9c;
}
.prop-rule {
    width: 223px;
    height: 2px;
    margin-top: 36px;
    background-color: #dcdcdc;
}
.restore-btn {
    display: block;
    width: 172px;
    height: 26px;
    margin-top: 6px;
    padding: 0;
    font-family: inherit;
    font-size: 12.5px;
    letter-spacing: 0.2px;
    color: #444;
    border: 1px solid #d0d0d0;
    border-radius: 2px;
    background: linear-gradient(#fbfbfb, #e0e0e0);
}
.prop-side {
    width: 40px;
    padding-top: 6px;
    padding-bottom: 6px;
    display: flex;
    flex-direction: column;
}
.prop-tab {
    width: 35px;
    height: 121px;
    background-color: #c9c9c9;
    border-radius: 2px;
    display: flex;
    flex-direction: column;
    align-items: center;
    padding-top: 12px;
}
.prop-tab-text {
    writing-mode: vertical-rl;
    transform: rotate(180deg);
    font-size: 14.5px;
    line-height: 16px;
    color: #444;
}
.tune {
    width: 16px;
    height: 16px;
    margin-top: 9px;
    color: #444;
}
.pin-btn.bottom {
    flex: 0 0 25px;
    margin: auto 0 0 5px;
}
```
